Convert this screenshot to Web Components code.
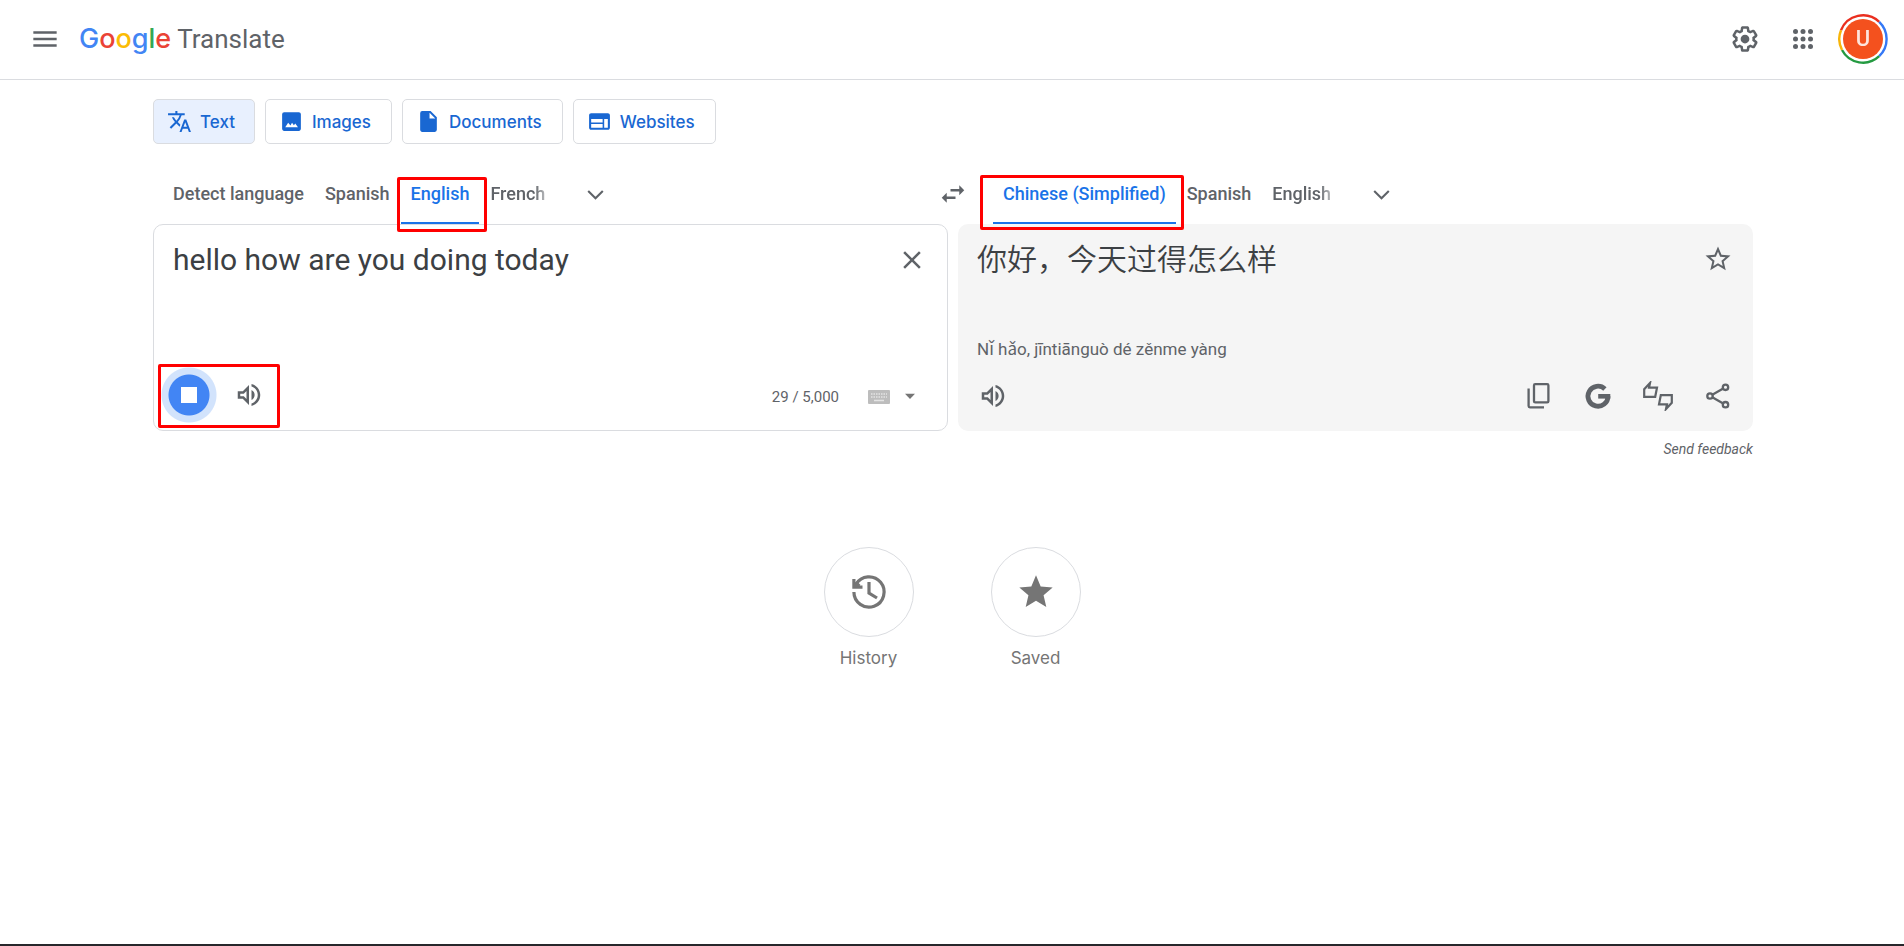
<!DOCTYPE html>
<html lang="en">
<head>
<meta charset="utf-8">
<meta name="viewport" content="width=device-width, initial-scale=1">
<title>Google Translate</title>
<style>
  body { margin: 0; background: #fff; font-family: Roboto, "Noto Sans CJK SC", sans-serif; color: #5f6368; }
</style>
</head>
<body>
<translate-app></translate-app>
<script>
const ICONS = {
  menu: ['24', '<path d="M2 5.400h20v2H2zM2 11h20v2H2zM2 16.600h20v2H2z"/>'],
  settings: ['24', '<path d="M13.85 22.25h-3.7c-.74 0-1.36-.54-1.45-1.27l-.27-1.89c-.27-.14-.53-.29-.79-.46l-1.8.72c-.7.26-1.47-.03-1.81-.65L2.2 15.53c-.35-.66-.2-1.44.36-1.88l1.53-1.19c-.01-.15-.02-.3-.02-.46 0-.15.01-.31.02-.46l-1.52-1.19c-.59-.45-.74-1.26-.37-1.88l1.85-3.19c.34-.62 1.11-.9 1.79-.63l1.81.73c.26-.17.52-.32.78-.46l.27-1.91c.09-.7.71-1.25 1.44-1.25h3.7c.74 0 1.36.54 1.45 1.27l.27 1.89c.27.14.53.29.79.46l1.8-.72c.71-.26 1.48.03 1.82.65l1.84 3.18c.36.66.2 1.44-.36 1.88l-1.52 1.19c.01.15.02.3.02.46s-.01.31-.02.46l1.52 1.19c.56.45.72 1.23.37 1.86l-1.86 3.22c-.34.62-1.11.9-1.8.63l-1.8-.72c-.26.17-.52.32-.78.46l-.27 1.91c-.1.68-.72 1.22-1.46 1.22zm-3.23-2h2.76l.37-2.55.53-.22c.44-.18.88-.44 1.34-.78l.45-.34 2.38.96 1.38-2.4-2.03-1.58.07-.56c.03-.26.06-.51.06-.78s-.03-.53-.06-.78l-.07-.56 2.03-1.58-1.39-2.4-2.39.96-.45-.35c-.42-.32-.87-.58-1.33-.77l-.52-.22-.37-2.55h-2.76l-.37 2.55-.53.21c-.44.19-.88.44-1.34.79l-.45.33-2.38-.95-1.39 2.39 2.03 1.58-.07.56a7 7 0 0 0-.06.79c0 .26.02.53.06.78l.07.56-2.03 1.58 1.38 2.4 2.39-.96.45.35c.43.33.86.58 1.33.77l.53.22.38 2.55z"/><circle cx="12" cy="12" r="3.5"/>'],
  apps: ['24', '<circle cx="6" cy="6" r="2"/><circle cx="12" cy="6" r="2"/><circle cx="18" cy="6" r="2"/><circle cx="6" cy="12" r="2"/><circle cx="12" cy="12" r="2"/><circle cx="18" cy="12" r="2"/><circle cx="6" cy="18" r="2"/><circle cx="12" cy="18" r="2"/><circle cx="18" cy="18" r="2"/>'],
  translate: ['24', '<path d="M12.87 15.07l-2.54-2.51.03-.03A17.52 17.52 0 0 0 14.07 6H17V4h-7V2H8v2H1v2h11.17C11.5 7.92 10.44 9.75 9 11.35 8.07 10.32 7.3 9.19 6.69 8h-2c.73 1.63 1.73 3.17 2.98 4.56l-5.09 5.02L4 19l5-5 3.11 3.11.76-2.04zM18.5 10h-2L12 22h2l1.12-3h4.75L21 22h2l-4.5-12zm-2.62 7l1.62-4.33L19.12 17h-3.24z"/>'],
  image: ['24', '<path fill-rule="evenodd" d="M19 3H5a2 2 0 0 0-2 2v14c0 1.1.9 2 2 2h14c1.1 0 2-.9 2-2V5c0-1.1-.9-2-2-2zM6 17.500l2.800-4.200 2.200 2.600 1.500-2.600 1.800 2.300 1.300-1.800 2.600 3.700z"/>'],
  document: ['24', '<path d="M6 2a2 2 0 0 0-2 2v16c0 1.1.9 2 2 2h12a2 2 0 0 0 2-2V8l-6-6H6zm7 7V3.5L18.5 9H13z"/>'],
  website: ['24', '<path d="M20 4H4c-1.100 0-1.990.9-1.990 2L2 18c0 1.100.9 2 2 2h16c1.100 0 2-.9 2-2V6c0-1.100-.9-2-2-2zm-5 14H4v-3.500h11V18zm0-5H4V9.500h11V13zm5 5h-3.500V9.500H20V18z"/>'],
  chevron: ['24', '<path d="M5 8.600l7 7 7-7" fill="none" stroke="currentColor" stroke-width="2"/>'],
  swap: ['24', '<path d="M6.990 11 3 15l3.990 4v-3H14v-2H6.990v-3zM21 9l-3.990-4v3H10v2h7.010v3L21 9z"/>'],
  close: ['24', '<path d="M19 6.410 17.590 5 12 10.590 6.410 5 5 6.410 10.590 12 5 17.590 6.410 19 12 13.410 17.590 19 19 17.590 13.410 12z"/>'],
  volume: ['24', '<path d="M3 9v6h4l5 5V4L7 9H3zm7-.17v6.34L7.830 13H5v-2h2.830L10 8.830zM16.500 12A4.500 4.500 0 0 0 14 7.970v8.050c1.480-.73 2.500-2.250 2.500-4.020zM14 3.230v2.060c2.890.86 5 3.540 5 6.710s-2.110 5.850-5 6.710v2.060c4.010-.91 7-4.490 7-8.770 0-4.280-2.990-7.860-7-8.770z"/>'],
  starline: ['24', '<path d="M22 9.240l-7.190-.62L12 2 9.190 8.630 2 9.240l5.460 4.730L5.820 21 12 17.270 18.180 21l-1.630-7.030L22 9.240zM12 15.400l-3.760 2.270 1-4.280-3.320-2.880 4.380-.38L12 6.100l1.710 4.040 4.380.38-3.320 2.880 1 4.280L12 15.400z"/>'],
  star: ['24', '<path d="M12 17.270 18.180 21l-1.640-7.030L22 9.240l-7.190-.61L12 2 9.190 8.630 2 9.240l5.460 4.730L5.820 21z"/>'],
  copy: ['30', '<g fill="none" stroke="currentColor" stroke-width="2.300"><rect x="11" y="3.200" width="14.400" height="18.200" rx="1.200"/><path d="M5.600 7.500V25a1.300 1.300 0 0 0 1.300 1.300H21"/></g>'],
  google: ['30', '<path d="M21.900 8A10 10 0 1 0 25 15.200" fill="none" stroke="currentColor" stroke-width="4.800"/><path d="M15.200 13h12.100v4.600H15.200z"/>'],
  thumbs: ['30', '<g fill="none" stroke="currentColor" stroke-width="2.200"><path d="M1.200 15.800V8.200L7 2 6 6.700h8L12.200 15.800z"/><path d="M1.200 15.800V8.200L7 2 6 6.700h8L12.200 15.800z" transform="rotate(180 15 15)"/></g>'],
  share: ['30', '<g fill="none" stroke="currentColor" stroke-width="2.300"><circle cx="22.500" cy="6.300" r="2.700"/><circle cx="7" cy="15" r="2.700"/><circle cx="22.500" cy="23.700" r="2.700"/><path d="M9.300 13.700 20.200 7.600M9.300 16.300l10.900 6.100"/></g>'],
  history: ['50', '<g fill="none" stroke="currentColor" stroke-width="3.200"><path d="M9.900 25A15.100 15.100 0 1 0 12 17.300"/><path d="M9.900 12v8.200h8.600M25 15v11l8 5"/></g><path d="M9.900 20.200v-4l3-2 3.500 3.500-1.500 2.500z"/>'],
  keyboard: ['24', '<rect x="1" y="5" width="22" height="14" rx="1" fill="#bdbdbd"/><path d="M4 9h16M4 12h16" stroke="#e4e4e4" stroke-width="1.500" stroke-dasharray="1.500 1"/><path d="M7 15.500h10" stroke="#e4e4e4" stroke-width="1.500"/>'],
  caret: ['24', '<path d="M0 4h24L12 17z"/>'],
  stop: ['24', '<path d="M0 0h24v24H0z"/>'],
  ring: ['50', '<g fill="none" stroke-width="2.400"><path d="M3 16.200A23.700 23.700 0 0 1 41.200 7.800" stroke="#ea2f1f"/><path d="M41.200 7.800A23.700 23.700 0 0 1 41.200 42.200" stroke="#3478f6"/><path d="M41.200 42.200A23.700 23.700 0 0 1 4 36" stroke="#249a41"/><path d="M4 36A23.700 23.700 0 0 1 3 16.200" stroke="#f7b50a"/></g><circle cx="25" cy="25" r="20" fill="#f4511e"/>']
};

function define(name, markup, setup) {
  const template = document.createElement('template');
  template.innerHTML = markup;
  customElements.define(name, class extends HTMLElement {
    constructor() {
      super();
      this.attachShadow({ mode: 'open' }).append(template.content.cloneNode(true));
    }
    connectedCallback() { if (setup) setup(this, this.shadowRoot); }
  });
}

/* Puts the icon named by the host's "icon" attribute at the start of its button. */
function addIcon(host, root) {
  const icon = document.createElement('ui-icon');
  icon.setAttribute('name', host.getAttribute('icon'));
  root.querySelector('button').prepend(icon);
}

define('ui-icon', `
  <style>
    :host { display: block; flex: none; width: var(--size, 30px); height: var(--size, 30px); }
    svg { display: block; width: 100%; height: 100%; fill: currentColor; }
  </style>
  <svg aria-hidden="true"></svg>`, (host, root) => {
  const [box, shape] = ICONS[host.getAttribute('name')];
  const svg = root.querySelector('svg');
  svg.setAttribute('viewBox', `0 0 ${box} ${box}`);
  svg.innerHTML = shape;
});

define('icon-button', `
  <style>
    :host { display: block; flex: none; }
    button { display: grid; place-items: center; width: var(--width, 60px); height: 60px; padding: 0; border: 0; border-radius: 50%; background: none; color: inherit; cursor: pointer; }
  </style>
  <button type="button"></button>`, (host, root) => {
  root.querySelector('button').setAttribute('aria-label', host.getAttribute('label'));
  addIcon(host, root);
});

define('highlight-frame', `
  <style>
    :host { position: absolute; z-index: 2; box-sizing: border-box; border: 3px solid #f00; border-radius: 2px; pointer-events: none; }
  </style>`);

define('app-header', `
  <style>
    :host { display: flex; align-items: center; height: 78px; padding: 0 15px 1px; border-bottom: 1px solid #dadce0; }
    .brand { display: flex; align-items: baseline; gap: 6px; margin-left: 4px; color: #5f6368; font: 26px/42px Roboto, sans-serif; text-decoration: none; }
    .google { font: 500 27px/42px Inter, sans-serif; }
    .b { color: #4285f4 } .r { color: #ea4335 } .y { color: #fbbc04 } .g { color: #34a853 }
    .space { flex: 1; }
    .avatar { display: grid; place-items: center; width: 50px; height: 50px; margin: 0 1px 0 7px; padding: 0; border: 0; background: none; color: #fff; font: 500 22px/50px Roboto, sans-serif; }
    .avatar > * { grid-area: 1 / 1; }
    .avatar span { z-index: 1; opacity: .85; }
    .avatar ui-icon { --size: 50px; }
    .apps { --width: 56px; }
    .menu { --size: 28px; }
  </style>
  <icon-button class="menu" icon="menu" label="Main menu"></icon-button>
  <a class="brand" href="#"><span class="google"><span class="b">G</span><span class="r">o</span><span class="y">o</span><span class="b">g</span><span class="g">l</span><span class="r">e</span></span><span>Translate</span></a>
  <div class="space"></div>
  <icon-button icon="settings" label="Settings"></icon-button>
  <icon-button class="apps" icon="apps" label="Google apps"></icon-button>
  <button class="avatar" type="button" aria-label="Account"><ui-icon name="ring"></ui-icon><span>U</span></button>`);

define('mode-button', `
  <style>
    :host { display: block; }
    button { display: flex; align-items: center; gap: 8px; height: 45px; padding: 0 20px 0 13px; border: 1px solid #dadce0; border-radius: 5px; background: #fff; color: #1967d2; font: 500 17px/24px Inter, sans-serif; cursor: pointer; }
    :host([active]) button { padding-right: 19px; background: #e8f0fe; }
    ui-icon { --size: 25px; }
  </style>
  <button type="button"><slot></slot></button>`, addIcon);

define('language-tab', `
  <style>
    :host { display: block; position: relative; }
    button { display: block; height: 62px; padding: 0 10px; border: 0; background: none; color: #5f6368; font: 500 18px/64px Roboto, sans-serif; white-space: nowrap; cursor: pointer; }
    :host([active]) button { box-shadow: inset 0 -2px #1a73e8; color: #1a73e8; }
    :host([fade]) button { mask-image: linear-gradient(90deg, #000 72%, #0005 90%); }
  </style>
  <button type="button" role="tab"><slot></slot></button><slot name="frame"></slot>`);

define('language-bar', `
  <style>
    :host { display: grid; grid-template-columns: minmax(0, 1fr) 80px minmax(0, 1fr); align-items: center; height: 62px; margin-top: 18px; }
    .tabs { display: flex; align-items: center; gap: 1px; height: 62px; }
    .source { padding-left: 10px; }
    .more, .swap { margin-top: 2px; }
    .more { margin-left: 9px; --size: 25px; }
    .swap { --size: 30px; --width: 80px; }
    .on-source { inset: 15px -8px -8px -4px; }
    .on-target { inset: 13px -8px -6px -13px; }
  </style>
  <div class="tabs source" role="tablist">
    <language-tab>Detect language</language-tab>
    <language-tab>Spanish</language-tab>
    <language-tab active>English<highlight-frame slot="frame" class="on-source"></highlight-frame></language-tab>
    <language-tab fade>French</language-tab>
    <icon-button class="more" icon="chevron" label="More source languages"></icon-button>
  </div>
  <icon-button class="swap" icon="swap" label="Swap languages"></icon-button>
  <div class="tabs" role="tablist">
    <language-tab active>Chinese (Simplified)<highlight-frame slot="frame" class="on-target"></highlight-frame></language-tab>
    <language-tab>Spanish</language-tab>
    <language-tab fade>English</language-tab>
    <icon-button class="more" icon="chevron" label="More target languages"></icon-button>
  </div>`);

define('source-panel', `
  <style>
    :host { display: flex; flex-direction: column; justify-content: space-between; box-sizing: border-box; min-height: 207px; border: 1px solid #dadce0; border-radius: 10px; background: #fff; }
    .entry { display: flex; align-items: flex-start; padding: 5px 5px 0 19px; }
    textarea { flex: 1; min-width: 0; height: 60px; padding: 10px 0; box-sizing: border-box; border: 0; outline: 0; resize: none; overflow: hidden; background: none; color: #3c4043; font: 30px/40px Roboto, sans-serif; }
    .tools { display: flex; align-items: center; padding: 0 32px 5px 5px; }
    .speech { display: flex; position: relative; }
    .mic { display: grid; place-items: center; width: 60px; height: 60px; padding: 0; border: 0; background: radial-gradient(circle, #4285f4 0 20px, #d2e3fc 21px 27px, transparent 28px); color: #fff; --size: 16px; }
    highlight-frame { inset: -1px -1px -3px -1px; }
    .count, .keyboard { margin-top: 4px; }
    .count { flex: 1; text-align: right; font-size: 15px; line-height: 20px; }
    .keyboard { display: flex; align-items: center; gap: 14px; margin-left: 28px; padding: 0; border: 0; background: none; color: #757575; }
    .keyboard .keys { --size: 24px; }
    .keyboard .caret { --size: 10px; }
  </style>
  <div class="entry">
    <textarea aria-label="Source text" spellcheck="false">hello how are you doing today</textarea>
    <icon-button icon="close" label="Clear source text"></icon-button>
  </div>
  <div class="tools">
    <div class="speech">
      <button class="mic" type="button" aria-label="Stop translation by voice"><ui-icon name="stop"></ui-icon></button>
      <icon-button icon="volume" label="Listen to source text"></icon-button>
      <highlight-frame></highlight-frame>
    </div>
    <span class="count">29 / 5,000</span>
    <button class="keyboard" type="button" aria-label="Input tool"><ui-icon class="keys" name="keyboard"></ui-icon><ui-icon class="caret" name="caret"></ui-icon></button>
  </div>`);

define('target-panel', `
  <style>
    :host { display: flex; flex-direction: column; box-sizing: border-box; min-height: 207px; border-radius: 10px; background: #f5f5f5; }
    .result { display: flex; justify-content: space-between; box-sizing: border-box; min-height: 100px; padding: 5px 5px 0 19px; }
    .text { margin: 8px 0 0; color: #3c4043; font: 350 30px/40px "Noto Sans CJK SC", sans-serif; }
    .reading { margin: 13px 0 4px 19px; font-size: 17px; line-height: 25px; }
    .tools { display: flex; padding: 0 5px 5px; margin-top: auto; }
    .tools .space { flex: 1; }
  </style>
  <div class="result"><p class="text" lang="zh-CN">你好，今天过得怎么样</p><icon-button icon="starline" label="Save translation"></icon-button></div>
  <p class="reading">Nǐ hǎo, jīntiānguò dé zěnme yàng</p>
  <div class="tools">
    <icon-button icon="volume" label="Listen to translation"></icon-button>
    <div class="space"></div>
    <icon-button icon="copy" label="Copy translation"></icon-button>
    <icon-button icon="google" label="Search this on Google"></icon-button>
    <icon-button icon="thumbs" label="Rate this translation"></icon-button>
    <icon-button icon="share" label="Share translation"></icon-button>
  </div>`);

define('round-link', `
  <style>
    :host { display: block; }
    a { display: flex; flex-direction: column; align-items: center; gap: 9px; color: #757575; font: 17px/24px Inter, sans-serif; text-decoration: none; }
    .disc { display: grid; place-items: center; box-sizing: border-box; width: 90px; height: 90px; border: 1px solid #dadce0; border-radius: 50%; }
  </style>
  <a href="#"><span class="disc"><slot name="icon"></slot></span><slot></slot></a>`);

define('translate-app', `
  <style>
    :host { display: flex; flex-direction: column; box-sizing: border-box; min-height: 100vh; border-bottom: 2px solid #27272b; }
    main { width: 100%; max-width: 1600px; margin: 0 auto; padding-left: 2px; }
    .modes { display: flex; gap: 10px; padding-top: 19px; }
    .panels { display: grid; grid-template-columns: repeat(2, minmax(0, 1fr)); gap: 10px; }
    .feedback { display: block; margin-top: 8px; color: #5f6368; font-size: 14px; line-height: 20px; font-style: italic; text-align: right; text-decoration: none; }
    .links { display: flex; justify-content: center; gap: 77px; margin-top: 88px; padding-right: 2px; }
    .wide { --size: 50px; }
    .mid { --size: 40px; }
  </style>
  <app-header></app-header>
  <main>
    <nav class="modes" aria-label="Translation types">
      <mode-button icon="translate" active>Text</mode-button>
      <mode-button icon="image">Images</mode-button>
      <mode-button icon="document">Documents</mode-button>
      <mode-button icon="website">Websites</mode-button>
    </nav>
    <language-bar></language-bar>
    <div class="panels"><source-panel></source-panel><target-panel></target-panel></div>
    <a class="feedback" href="#">Send feedback</a>
    <nav class="links" aria-label="Your translations">
      <round-link><ui-icon slot="icon" class="wide" name="history"></ui-icon>History</round-link>
      <round-link><ui-icon slot="icon" class="mid" name="star"></ui-icon>Saved</round-link>
    </nav>
  </main>`);
</script>
</body>
</html>
